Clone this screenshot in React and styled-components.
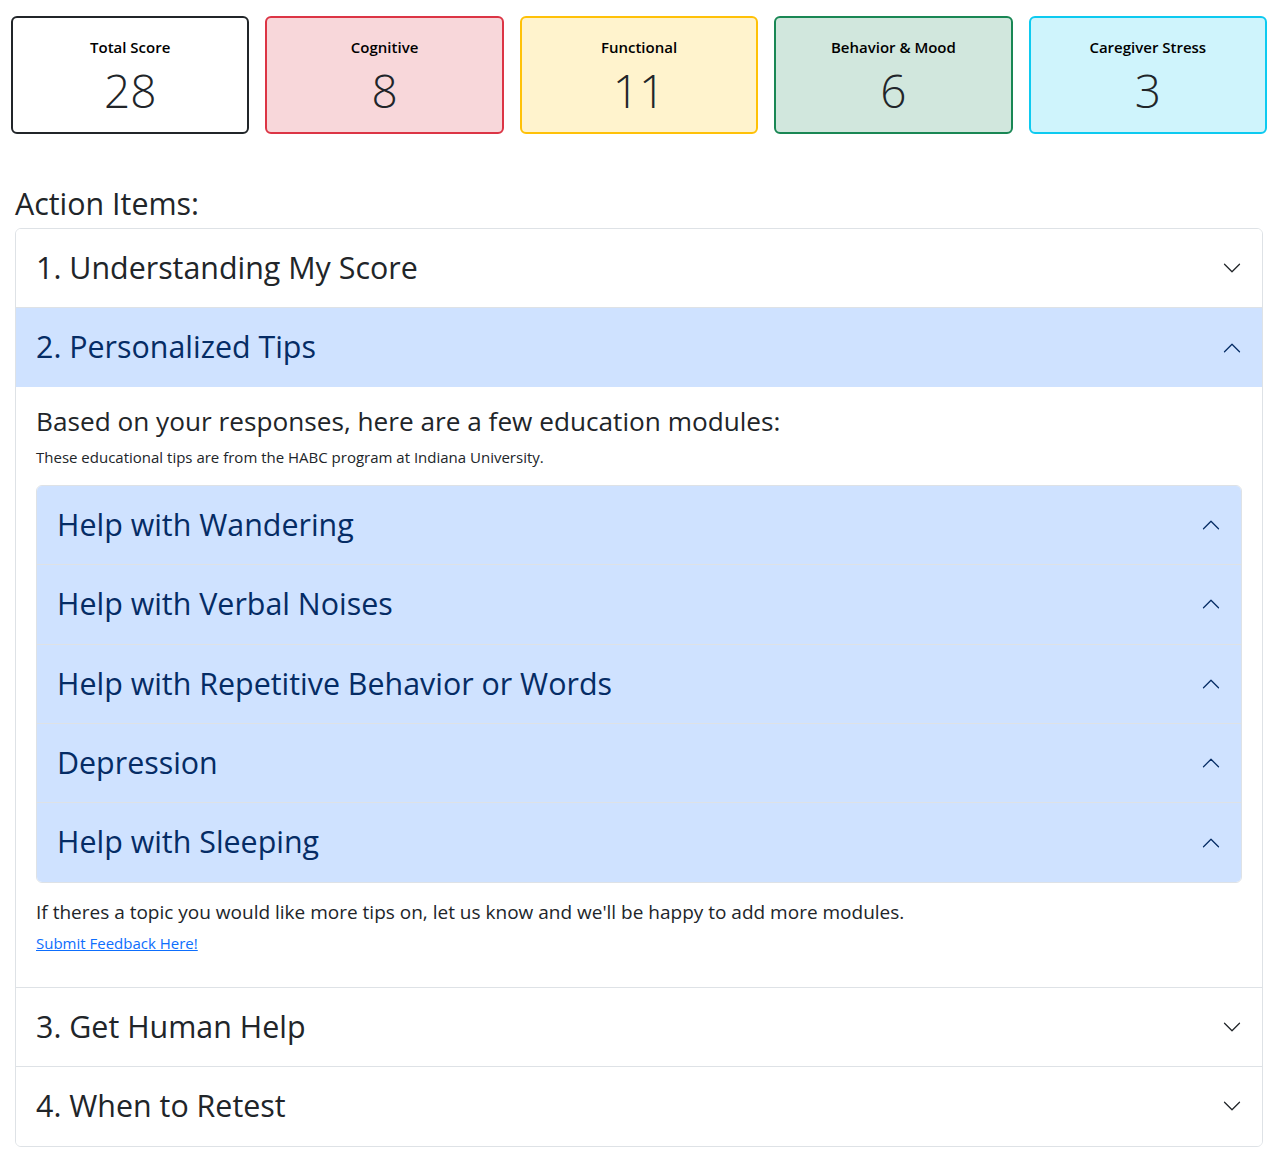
import React from "react";
import styled, { createGlobalStyle } from "styled-components";

const GlobalStyle = createGlobalStyle`
  body {
    margin: 0;
    font-family: "Open Sans", "Noto Sans", sans-serif;
    color: #212529;
    background: #fff;
  }
  * {
    box-sizing: border-box;
  }
`;

const tones = {
  dark: { border: "#212529", bg: "#ffffff" },
  danger: { border: "#dc3545", bg: "#f8d7da" },
  warning: { border: "#ffc107", bg: "#fff3cd" },
  success: { border: "#198754", bg: "#d1e7dd" },
  info: { border: "#0dcaf0", bg: "#cff4fc" },
};

const Page = styled.div`
  padding: 16px 14px 16px 11px;
`;

const ScoreRow = styled.div`
  display: grid;
  grid-template-columns: repeat(5, 1fr);
  gap: 16px;
`;

const ScoreCard = styled.div`
  height: 118px;
  border: 2px solid ${({ tone }) => tones[tone].border};
  background: ${({ tone }) => tones[tone].bg};
  border-radius: 6px;
  display: flex;
  flex-direction: column;
  align-items: center;
  padding-top: 17px;
`;

const ScoreLabel = styled.div`
  font-size: 15px;
  font-weight: 600;
  line-height: 24px;
  color: #000;
`;

const ScoreValue = styled.div`
  font-size: 46px;
  font-weight: 300;
  line-height: 52px;
  margin-top: 5px;
`;

const Section = styled.div`
  margin: 0 4px;
`;

const SectionTitle = styled.h2`
  margin: 51px 0 5px;
  font-size: 30.4px;
  font-weight: 400;
  line-height: 38px;
`;

const Accordion = styled.div`
  border: 1px solid #dee2e6;
  border-radius: 6px;
  overflow: hidden;
`;

const Item = styled.div`
  & + & {
    border-top: 1px solid #dee2e6;
  }
`;

const Header = styled.button`
  display: flex;
  align-items: center;
  justify-content: space-between;
  width: 100%;
  border: 0;
  margin: 0;
  padding: 16px 20px;
  font-family: inherit;
  font-size: 30.4px;
  line-height: 46.4px;
  text-align: left;
  cursor: pointer;
  background: ${({ open }) => (open ? "#cfe2ff" : "#fff")};
  color: ${({ open }) => (open ? "#052c65" : "#212529")};
`;

const Chevron = styled.svg`
  width: 20px;
  height: 20px;
  flex-shrink: 0;
  transform: ${({ open }) => (open ? "rotate(-180deg)" : "none")};
`;

const Body = styled.div`
  padding: 16px 20px;
`;

const BodyTitle = styled.h4`
  margin: 0;
  font-size: 26.2px;
  font-weight: 400;
  line-height: 36px;
`;

const Note = styled.p`
  margin: 8px 0 17px;
  font-size: 15px;
  line-height: 21px;
`;

const Closing = styled.p`
  margin: 14px 0 0;
  font-size: 19px;
  line-height: 30px;
`;

const FeedbackLink = styled.a`
  display: inline-block;
  margin: 5px 0 17px;
  font-size: 15px;
  line-height: 22px;
  color: #0d6efd;
  text-decoration: underline;
`;

const Arrow = ({ open }) => (
  <Chevron open={open} viewBox="0 0 16 16" fill="none">
    <path
      d="M2 5L8 11L14 5"
      stroke={open ? "#052c65" : "#212529"}
      strokeLinecap="round"
      strokeLinejoin="round"
    />
  </Chevron>
);

const Row = ({ title, open }) => (
  <Header open={open}>
    <span>{title}</span>
    <Arrow open={open} />
  </Header>
);

const scores = [
  { label: "Total Score", value: 28, tone: "dark" },
  { label: "Cognitive", value: 8, tone: "danger" },
  { label: "Functional", value: 11, tone: "warning" },
  { label: "Behavior & Mood", value: 6, tone: "success" },
  { label: "Caregiver Stress", value: 3, tone: "info" },
];

const modules = [
  "Help with Wandering",
  "Help with Verbal Noises",
  "Help with Repetitive Behavior or Words",
  "Depression",
  "Help with Sleeping",
];

const App = () => {
  return (
    <>
      <GlobalStyle />
      <Page>
        <ScoreRow>
          {scores.map(({ label, value, tone }) => (
            <ScoreCard key={label} tone={tone}>
              <ScoreLabel>{label}</ScoreLabel>
              <ScoreValue>{value}</ScoreValue>
            </ScoreCard>
          ))}
        </ScoreRow>
        <Section>
          <SectionTitle>Action Items:</SectionTitle>
          <Accordion>
            <Item>
              <Row title="1. Understanding My Score" />
            </Item>
            <Item>
              <Row title="2. Personalized Tips" open />
              <Body>
                <BodyTitle>
                  Based on your responses, here are a few education modules:
                </BodyTitle>
                <Note>
                  These educational tips are from the HABC program at Indiana
                  University.
                </Note>
                <Accordion>
                  {modules.map((m) => (
                    <Item key={m}>
                      <Row title={m} open />
                    </Item>
                  ))}
                </Accordion>
                <Closing>
                  If theres a topic you would like more tips on, let us know and
                  we'll be happy to add more modules.
                </Closing>
                <FeedbackLink href="#">Submit Feedback Here!</FeedbackLink>
              </Body>
            </Item>
            <Item>
              <Row title="3. Get Human Help" />
            </Item>
            <Item>
              <Row title="4. When to Retest" />
            </Item>
          </Accordion>
        </Section>
      </Page>
    </>
  );
};

export default App;
